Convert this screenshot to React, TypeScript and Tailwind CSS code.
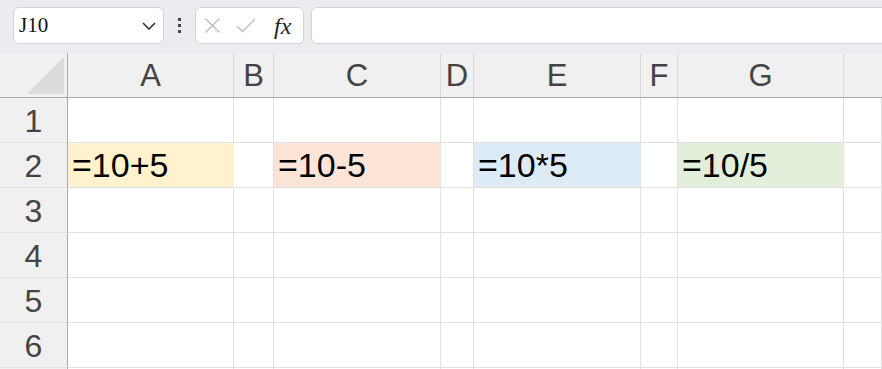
import React from "react";

const COLS = ["A", "B", "C", "D", "E", "F", "G", ""];
const ROWS = [1, 2, 3, 4, 5, 6, 7];

const ROW2: Record<number, { text: string; bg: string }> = {
  1: { text: "=10+5", bg: "bg-[#fff2cc] border-r-[#fff2cc]" },
  3: { text: "=10-5", bg: "bg-[#fce4d6] border-r-[#fce4d6]" },
  5: { text: "=10*5", bg: "bg-[#ddebf7] border-r-[#ddebf7]" },
  7: { text: "=10/5", bg: "bg-[#e2efda] border-r-[#e2efda]" },
};

const GRID = "grid grid-cols-[68px_166px_40px_167px_33px_167px_37px_166px_1fr]";

function Toolbar() {
  return (
    <div className="flex h-[53px] items-start overflow-hidden bg-[#ebebf0] pl-[13px] pt-[7px]">
      <div className="flex h-[37px] w-[151px] shrink-0 items-center justify-between rounded-[6px] border border-[#d3d3d6] bg-white pl-[5px] pr-[7px]">
        <span className="font-['Liberation_Serif',serif] text-[21px] leading-none text-[#111]">J10</span>
        <svg width="14" height="8" viewBox="0 0 14 8" fill="none">
          <path d="M1 1l6 6 6-6" stroke="#333" strokeWidth="1.6" />
        </svg>
      </div>
      <div className="flex h-[37px] w-[31px] shrink-0 flex-col items-center justify-center gap-[3px]">
        <span className="h-[3px] w-[3px] bg-[#444]" />
        <span className="h-[3px] w-[3px] bg-[#444]" />
        <span className="h-[3px] w-[3px] bg-[#444]" />
      </div>
      <div className="flex h-[37px] w-[109px] shrink-0 items-center rounded-[6px] border border-[#d3d3d6] bg-white pl-[8px]">
        <svg width="17" height="17" viewBox="0 0 17 17" fill="none">
          <path d="M1.5 1.5l14 14M15.5 1.5l-14 14" stroke="#bdbdbd" strokeWidth="1.4" />
        </svg>
        <svg className="ml-[15px]" width="20" height="15" viewBox="0 0 20 15" fill="none">
          <path d="M1 8l5.5 5.5L19 1" stroke="#bdbdbd" strokeWidth="1.4" />
        </svg>
        <span className="ml-[18px] font-['Liberation_Serif',serif] text-[24px] italic leading-none text-[#222]">fx</span>
      </div>
      <div className="ml-[7px] h-[37px] w-[640px] shrink-0 rounded-[6px] border border-[#d3d3d6] bg-white" />
    </div>
  );
}

export default function App() {
  return (
    <div className="h-[369px] w-[882px] overflow-hidden bg-white font-['Liberation_Sans',Arial,sans-serif]">
      <Toolbar />
      <div className={`${GRID} h-[45px] border-b border-[#ababab] bg-[#f0f0f0]`}>
        <div className="flex items-end justify-end border-r border-[#ababab] pb-[3px] pr-[3px]">
          <svg width="37" height="37" viewBox="0 0 37 37">
            <path d="M37 0V37H0Z" fill="#dcdcdc" />
          </svg>
        </div>
        {COLS.slice(0, 7).map((c) => (
          <div
            key={c}
            className="flex items-center justify-center border-r border-[#dcdcdc] text-[31px] leading-none text-[#444]"
          >
            {c}
          </div>
        ))}
        <div />
      </div>
      {ROWS.map((r) => (
        <div key={r} className={`${GRID} h-[45px]`}>
          <div className="flex items-center justify-center border-r border-b border-r-[#ababab] border-b-[#e2e2e2] bg-[#f0f0f0] pt-[2px] text-[32px] leading-none text-[#444]">
            {r < 7 ? r : ""}
          </div>
          {COLS.map((c, i) => {
            const cell = r === 2 ? ROW2[i + 1] : undefined;
            return (
              <div
                key={i}
                className={`flex items-center border-r border-b border-[#e1e1e1] pl-[4px] text-[34px] leading-none text-black ${
                  cell ? cell.bg : ""
                }`}
              >
                {cell?.text}
              </div>
            );
          })}
        </div>
      ))}
    </div>
  );
}
